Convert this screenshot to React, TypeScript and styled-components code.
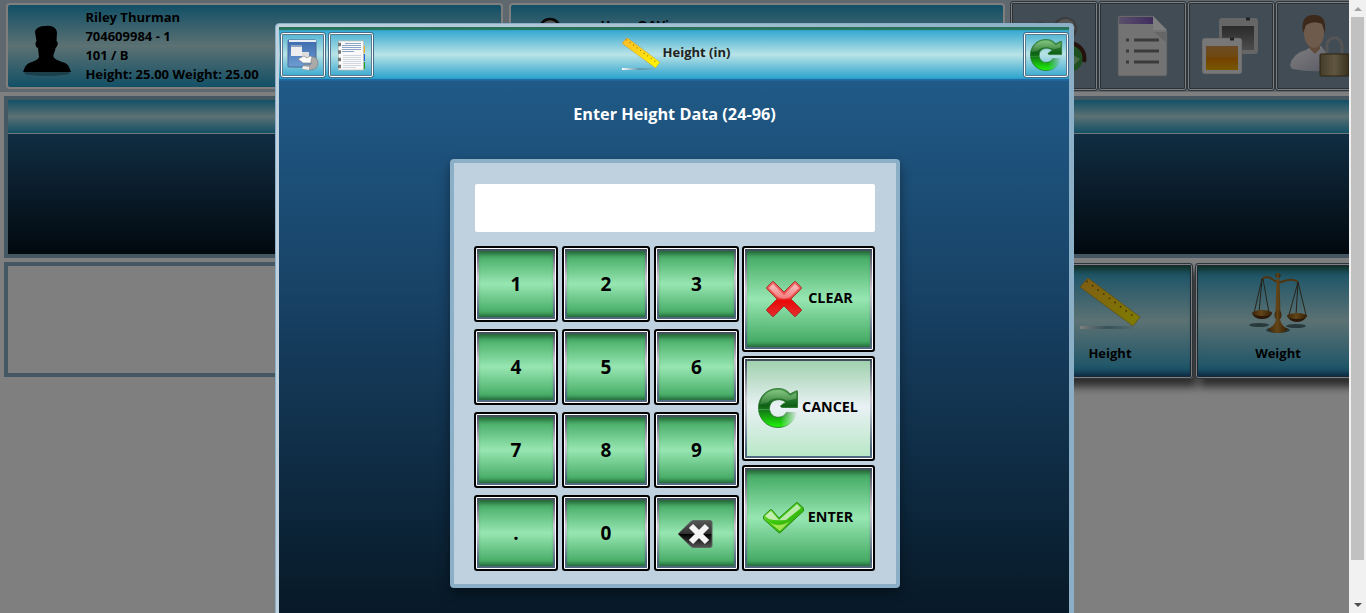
import React from 'react';
import styled, { createGlobalStyle, css } from 'styled-components';

const GlobalStyle = createGlobalStyle`
  * { box-sizing: border-box; }
  body { margin: 0; background: #fff; font-family: "Open Sans", sans-serif; overflow: hidden; }
  button { font-family: inherit; padding: 0; margin: 0; cursor: pointer; }
  svg { display: block; flex: none; overflow: visible; }
`;

const aqua = 'linear-gradient(#24a0cd 0%, #b8e3e6 50%, #24a0cd 100%)';

const Screen = styled.div`
  display: flex;
  width: 1366px;
  height: 613px;
  overflow: hidden;
`;

const Page = styled.main`
  position: relative;
  width: 1349px;
  height: 613px;
  overflow: hidden;
  background: #fff;
`;

const ScrollTrack = styled.div`
  width: 17px;
  height: 613px;
  background: #f1f1f1;
  display: flex;
  flex-direction: column;
  padding: 0 2px;
`;

const ScrollEnd = styled.div<{ $pushed?: boolean }>`
  height: 17px;
  display: flex;
  align-items: center;
  justify-content: center;
  ${(p) => p.$pushed && 'margin-top: auto;'}
`;

const ScrollThumb = styled.div`
  height: 543px;
  background: #c1c1c1;
`;

const TopBar = styled.header`
  display: flex;
  height: 92px;
  padding: 3px 0 0 6px;
  background: #bfd1df;
`;

const InfoCard = styled.section<{ $width: number }>`
  display: flex;
  flex: none;
  width: ${(p) => p.$width}px;
  height: 86px;
  margin-right: 6px;
  border: 2px solid #fff;
  border-radius: 4px;
  background: ${aqua};
  color: #000;
  padding: 3px 0 0 14px;
`;

const Avatar = styled.div`
  width: 50px;
  padding-top: 16px;
  margin-right: 13.4px;
`;

const InfoLines = styled.div`
  font-size: 13px;
  font-weight: 700;
  line-height: 19px;
  white-space: nowrap;
`;

const UserLines = styled(InfoLines)`
  padding: 8px 0 0 12px;
`;

const ToolGroup = styled.nav`
  display: flex;
  margin: -2px 0 0 -1.5px;
`;

const ToolButton = styled.button`
  display: flex;
  flex: none;
  align-items: center;
  justify-content: center;
  width: 88.5px;
  height: 90px;
  border: 1px solid #5b6c7b;
  border-radius: 3px;
  background: #8299aa;
  box-shadow: inset 0 0 0 1px #fff, inset 0 0 0 2px #53616c;
`;

const BannerPanel = styled.section`
  margin: 4px 0 0 4px;
  height: 162px;
  width: 1360px;
  border: 4px solid #8aafc6;
  display: flex;
  flex-direction: column;
`;

const BannerHead = styled.div`
  height: 34px;
  border-bottom: 1px solid #e4eef4;
  background: ${aqua};
`;

const BannerBody = styled.div`
  flex: 1;
  background: linear-gradient(#205a85 0%, #163e5c 40%, #04121e 100%);
`;

const Lower = styled.div`
  display: flex;
  width: 1357px;
  justify-content: space-between;
  margin: 4px 0 0 4px;
`;

const EmptyPanel = styled.section`
  width: 600px;
  height: 115px;
  border: 4px solid #8aafc6;
`;

const TileGroup = styled.div`
  display: flex;
  gap: 3px;
  padding-top: 1px;
`;

const Tile = styled.button`
  display: flex;
  flex-direction: column;
  align-items: center;
  width: 166px;
  height: 116px;
  border: 1px solid #5b6c7b;
  border-radius: 3px;
  padding-top: 8px;
  background: ${aqua};
  box-shadow: inset 0 0 0 1px #fff, inset 0 0 0 2px #34506c, inset 0 10px 8px -5px #224d21,
    inset 0 -9px 7px -5px #193a6c, 4px 8px 8px rgba(0, 0, 0, 0.65);
  font-size: 13px;
  font-weight: 700;
  color: #000;

  &:first-child {
    margin-right: -1px;
  }
`;

const TilePicture = styled.span<{ $drop?: number }>`
  display: block;
  height: 62px;
  padding-top: ${(p) => p.$drop ?? 0}px;
`;

const TileLabel = styled.span`
  margin-top: 10px;
  line-height: 18px;
`;

const Backdrop = styled.div`
  position: absolute;
  inset: 0;
  display: flex;
  justify-content: center;
  align-items: flex-start;
  padding-top: 23px;
  background: rgba(0, 0, 0, 0.5);
`;

const Dialog = styled.section`
  display: flex;
  flex-direction: column;
  width: 799px;
  height: 700px;
  flex: none;
  border: 1px solid #8aafc6;
  border-radius: 4px 4px 0 0;
  padding: 3px 4px 0 3px;
  background: linear-gradient(to right, #bfd1df, #8aafc6);
`;

const DialogBar = styled.header`
  display: flex;
  flex: none;
  align-items: flex-start;
  height: 54px;
  padding: 5px 0 0 1px;
  background: linear-gradient(#24a0cd 0%, #b8e3e6 51%, #24a0cd 98%);
  box-shadow: inset 0 3px 1px #287357, inset 0 -2px 1px #21659f;
`;

const BarButton = styled.button`
  display: flex;
  flex: none;
  align-items: center;
  justify-content: center;
  width: 46px;
  height: 46px;
  border: 1px solid #426c88;
  border-radius: 3px;
  background: linear-gradient(#4eb3d3, #b8e3e6 48%, #36a8cf);
  box-shadow: inset 0 0 0 1px #fff, inset 0 0 0 2px #5c7990;
`;

const BarTools = styled.div`
  display: flex;
  gap: 2px;
`;

const DialogTitle = styled.h1`
  display: flex;
  flex: 1;
  justify-content: center;
  margin: 0;
  padding: 5px 45px 0 0;
  font-size: 13px;
  font-weight: 700;
  color: #222;
`;

const TitleText = styled.span`
  line-height: 18px;
  padding: 6px 0 0 3px;
`;

const DialogBody = styled.div`
  flex: none;
  height: 640px;
  display: flex;
  flex-direction: column;
  align-items: center;
  background: linear-gradient(#205a87 0, #184266 210px, #081b2a 515px, #071723 100%);
`;

const Prompt = styled.h2`
  margin: 20px 0 0 1px;
  height: 26px;
  line-height: 26px;
  font-size: 16.25px;
  font-weight: 700;
  color: #fff;
`;

const Keypad = styled.div`
  width: 450px;
  height: 429px;
  margin: 32px 0 0 1px;
  border: 4px solid #8aafc6;
  border-radius: 4px;
  background: #bfd1df;
  padding: 21px 20px 0 20px;
  box-shadow: 0 5px 12px rgba(0, 0, 0, 0.4);
`;

const Entry = styled.input`
  display: block;
  width: 400px;
  height: 48px;
  margin: 0 0 14px 1px;
  border: 0;
  border-radius: 2px;
  background: #fff;
  outline: none;
`;

const KeyArea = styled.div`
  display: flex;
  gap: 3px;
`;

const KeyGrid = styled.div`
  display: grid;
  grid-template-columns: 84px 88px 85px;
  grid-auto-rows: 76px;
  gap: 7px 4px;
`;

const ActionColumn = styled.div`
  display: grid;
  grid-template-rows: 106px 105px 106px;
  gap: 4px;
  width: 133px;
`;

const KeyFrame = styled.button`
  display: flex;
  width: 100%;
  height: 100%;
  border: 2px solid #000;
  border-radius: 3px;
  padding: 3px;
  background: linear-gradient(#3a4654, #c9c3d0 40%, #b5bdc8 52%, #4e667b 90%, #526a80);
  box-shadow: inset 0 0 0 1px #fff;
`;

const KeyFace = styled.span<{ $hover?: boolean; $small?: boolean }>`
  display: flex;
  flex: 1;
  align-items: center;
  justify-content: center;
  align-self: stretch;
  height: 100%;
  font-size: ${(p) => (p.$small ? 14.3 : 19)}px;
  font-weight: 700;
  color: #000;
  padding-bottom: 1px;
  padding-left: ${(p) => (p.$small ? 0 : 1)}px;
  ${(p) =>
    p.$hover
      ? css`
          background: linear-gradient(#a0d1ae, #e9f1f4 48%, #b9e8c7);
        `
      : css`
          background: linear-gradient(#3ba45b, #97e6b2 50%, #3ba45b);
          box-shadow: inset 0 7px 5px -4px #256238, inset 0 -5px 4px -3px #256036;
        `}
`;

const ActionText = styled.span<{ $gap: number }>`
  margin-left: ${(p) => p.$gap}px;
  padding-bottom: 3px;
`;

function Key({ children }: { children: React.ReactNode }) {
  return (
    <KeyFrame>
      <KeyFace>{children}</KeyFace>
    </KeyFrame>
  );
}

function Action({ icon, label, gap, hover }: { icon: React.ReactNode; label: string; gap: number; hover?: boolean }) {
  return (
    <KeyFrame>
      <KeyFace $small $hover={hover}>
        {icon}
        <ActionText $gap={gap}>{label}</ActionText>
      </KeyFace>
    </KeyFrame>
  );
}

const DefsHost = styled.svg`
  position: absolute;
`;

const Defs = () => (
  <DefsHost width="0" height="0">
    <defs>
      <linearGradient id="rulerFill" x1="0" x2="1" y1="0" y2="1">
        <stop offset="0" stopColor="#ffb82b" />
        <stop offset="1" stopColor="#fffa00" />
      </linearGradient>
      <linearGradient id="rulerShade">
        <stop offset="0" stopColor="#fff" />
        <stop offset=".5" stopColor="#5d8b9c" stopOpacity=".7" />
        <stop offset="1" stopColor="#5d8b9c" stopOpacity="0" />
      </linearGradient>
      <linearGradient id="arrowFill" x1="0" x2="0" y1="0" y2="1">
        <stop offset="0" stopColor="#4f9f50" />
        <stop offset=".44" stopColor="#0f5f17" />
        <stop offset=".62" stopColor="#138a13" />
        <stop offset=".95" stopColor="#1ee80a" />
      </linearGradient>
      <linearGradient id="arrowFade" x1="0" x2="1" y1="0" y2="0">
        <stop offset=".55" stopColor="#fff" />
        <stop offset=".9" stopColor="#fff" stopOpacity=".05" />
      </linearGradient>
      <linearGradient id="arrowGloss" x1="0" x2="0" y1="0" y2="1">
        <stop offset="0" stopColor="#b9ecb5" stopOpacity=".5" />
        <stop offset="1" stopColor="#b9ecb5" stopOpacity=".15" />
      </linearGradient>
      <mask id="tailMask" maskUnits="userSpaceOnUse" x="-2" y="-2" width="46" height="46">
        <rect x="-2" y="-2" width="46" height="24" fill="#fff" />
        <rect x="-2" y="22" width="46" height="22" fill="url(#arrowFade)" />
      </mask>
      <linearGradient id="redFill" x1="0" x2="0" y1="0" y2="1">
        <stop offset="0" stopColor="#ee6a6a" />
        <stop offset=".45" stopColor="#ee4a4a" />
        <stop offset=".55" stopColor="#e80808" />
        <stop offset="1" stopColor="#e43030" />
      </linearGradient>
      <linearGradient id="gloss" x1="0" x2="0" y1="0" y2="1">
        <stop offset="0" stopColor="#fff" stopOpacity=".6" />
        <stop offset="1" stopColor="#fff" stopOpacity=".25" />
      </linearGradient>
      <linearGradient id="checkFill" x1="0" x2="1" y1="0" y2="1">
        <stop offset="0" stopColor="#8fdc50" />
        <stop offset=".45" stopColor="#3cc80c" />
        <stop offset="1" stopColor="#2b9c10" />
      </linearGradient>
      <linearGradient id="blackFill" x1="0" x2="0" y1="0" y2="1">
        <stop offset="0" stopColor="#555" />
        <stop offset=".48" stopColor="#333" />
        <stop offset=".5" stopColor="#000" />
        <stop offset="1" stopColor="#555" />
      </linearGradient>
      <linearGradient id="brass" x1="0" x2="1">
        <stop offset="0" stopColor="#7b4a12" />
        <stop offset=".45" stopColor="#c48a30" />
        <stop offset="1" stopColor="#6b3c0c" />
      </linearGradient>
      <linearGradient id="windowFill" x1="0" x2="0" y1="0" y2="1">
        <stop offset="0" stopColor="#3c6bae" />
        <stop offset="1" stopColor="#6f9dd2" />
      </linearGradient>
      <linearGradient id="silver" x1="0" x2="0" y1="0" y2="1">
        <stop offset="0" stopColor="#777" />
        <stop offset="1" stopColor="#9c9c9c" />
      </linearGradient>
      <linearGradient id="amber" x1="0" x2="0" y1="0" y2="1">
        <stop offset="0" stopColor="#d8974a" />
        <stop offset=".45" stopColor="#dd9420" />
        <stop offset=".5" stopColor="#e68200" />
        <stop offset="1" stopColor="#f0b000" />
      </linearGradient>
      <linearGradient id="greyPhoto" x1="0" x2="0" y1="0" y2="1">
        <stop offset="0" stopColor="#555" />
        <stop offset="1" stopColor="#999" />
      </linearGradient>
      <linearGradient id="lilac">
        <stop offset="0" stopColor="#b3a2d8" />
        <stop offset="1" stopColor="#8059bd" />
      </linearGradient>
      <linearGradient id="lockFill">
        <stop offset="0" stopColor="#8b7952" />
        <stop offset=".5" stopColor="#c2ad81" />
        <stop offset="1" stopColor="#73643f" />
      </linearGradient>
      <linearGradient id="shirt" x1="0" x2="1" y1="0" y2="1">
        <stop offset="0" stopColor="#fff" />
        <stop offset="1" stopColor="#b3b4cb" />
      </linearGradient>
    </defs>
  </DefsHost>
);

const RulerIcon = ({ size }: { size: number }) => (
  <svg width={size} height={size} viewBox="0 0 60 60">
    <path d="M0 49h56v3H0z" fill="url(#rulerShade)" />
    <path d="M8 1 60 40 53 49 0 10z" fill="url(#rulerFill)" stroke="#b78a16" strokeWidth=".6" />
    <g fill="#8a640e">
      {[0, 1, 2, 3, 4, 5, 6, 7, 8].map((i) => (
        <circle key={i} cx={7 + i * 5.6} cy={4.5 + i * 4.2} r=".9" />
      ))}
    </g>
  </svg>
);

const RefreshIcon = ({ size }: { size: number }) => (
  <svg width={size} height={size} viewBox="0 0 41 41">
    <g mask="url(#tailMask)">
      <path
        d="M33 6 39 3C40.500 2.500 40.500 3 40.500 4V20H25.500C23 20 22.500 18.500 24 17.500L28.500 14.500C26 12.500 23 11.800 20.500 12C15 12.300 11.800 16 11.800 21C12 26.500 16 30 20.500 30C25 30 27.500 28 29 25H39.500C38 34 30 40.500 20.500 40.500C9 40.500.5 31.500.5 20.500C.5 9 9 .5 20.500.5C25.500.5 29.500 2 33 6Z"
        fill="url(#arrowFill)"
        stroke="#216c21"
        strokeWidth=".8"
      />
      <path d="M2 17C4 7 11 2 20 2C26 2 29 4 33 8L39 5V11L30 13C22 9 14 10 10 15Z" fill="url(#arrowGloss)" />
    </g>
  </svg>
);

const ClearIcon = () => (
  <svg width="40" height="36" viewBox="-3 0 40 36">
    <path
      d="M6 1 1 6Q0 7 1 8L11 18 1 28Q0 29 1 30L6 35Q7 36 8 35L18 25 28 35Q29 36 30 35L35 30Q36 29 35 28L25 18 35 8Q36 7 35 6L30 1Q29 0 28 1L18 11 8 1Q7 0 6 1Z"
      fill="url(#redFill)"
      stroke="#a23a2c"
    />
    <path d="M3 7 7 3 18 14 29 3 33 7 24 16Q18 20 12 16Z" fill="url(#gloss)" />
  </svg>
);

const CheckIcon = () => (
  <svg width="41" height="32" viewBox="0 0 41 32">
    <path d="M.5 14 7 8Q8 7 9 8L16 16 33 1Q34 0 35 1L40.500 6V9L18 30Q16.500 32 15 30L.5 17Z" fill="url(#checkFill)" stroke="#2e8f17" />
    <path d="M2 14 8 9 16 18 34 2 38 6 23 18Q12 19 6 17Z" fill="#fff" opacity=".65" />
    <path d="M7 21Q17 26 27 19L17 29Z" fill="#d8f878" opacity=".65" />
  </svg>
);

const BackspaceIcon = () => (
  <svg width="39" height="28" viewBox="0 -1 39 28">
    <path d="M1 14 14 1.500Q15 .5 17 .5H33Q35 .5 35 2.500V25.500Q35 27.500 33 27.500H17Q15 27.500 14 26.500Z" fill="url(#blackFill)" stroke="#5b665f" />
    <path d="m14 6 16 16M30 6 14 22" stroke="#f4f4f4" strokeWidth="6" />
  </svg>
);

const PersonShadow = () => (
  <svg width="50" height="53" viewBox="0 0 50 53">
    <ellipse cx="25" cy="49" rx="23" ry="3" fill="#1b4958" opacity=".5" />
    <path d="M13 8C14 3 19 2 24 2 30 1 35 4 35 9L34.500 17C36.500 18 36 22 33.500 24 33 29 31 29 31.500 33 34 38 45 37 47 43L49 48H1L3 43C6 37 16 38 17 33L16 24C13 23 13 19 14.500 17Z" />
  </svg>
);

const UserBadge = () => (
  <svg width="50" height="50" viewBox="0 0 50 50">
    <circle cx="25" cy="5" r="10" fill="#aaa" stroke="#111" strokeWidth="2.500" />
  </svg>
);

const PeopleIcon = () => (
  <svg width="58" height="60" viewBox="0 0 58 60">
    <circle cx="16" cy="16" r="10" fill="url(#silver)" />
    <circle cx="40" cy="13" r="12" fill="#777" />
    <path d="M31 9Q39-2 48 6L51 14Q45 11 38 7Z" fill="#aaa" />
    <circle cx="44" cy="42" r="14" fill="#3d9e42" />
    <path d="M46 27C56 29 61 37 59 46" stroke="#4a2518" strokeWidth="4" fill="none" />
    <path d="m43 36 12 7-10 10z" fill="#8fce8e" />
  </svg>
);

const DocIcon = () => (
  <svg width="49" height="60" viewBox="0 0 49 60">
    <path d="M1 0H35L49 15V58Q49 60 47 60H1Q0 60 0 58V2Q0 0 1 0Z" fill="#e6e6e6" stroke="#aaa" strokeWidth=".7" />
    <path d="M1 1H35V8H1z" fill="url(#lilac)" />
    <path d="M35 0V14H49Z" fill="#fff" />
    <path d="M36 16H48V26Z" fill="#bbb" opacity=".6" />
    <g stroke="#777" strokeWidth="3">
      <path d="M8 24h3M16 24h25M8 35h3M16 35h25M8 46h3M16 46h25" />
    </g>
  </svg>
);

const PhotosIcon = () => (
  <svg width="57" height="56" viewBox="0 0 57 56">
    <rect x="17" y="0" width="39" height="36" rx="3" fill="#ccc" />
    <rect x="20" y="8" width="32" height="24" fill="url(#greyPhoto)" />
    <rect x="0" y="20" width="40" height="36" rx="3" fill="#efefef" stroke="#aaa" strokeWidth=".6" />
    <rect x="4" y="28" width="32" height="24" fill="url(#amber)" />
    <path d="M44 1h4M28 21h4" stroke="#444" strokeWidth="3" />
  </svg>
);

const LockUserIcon = () => (
  <svg width="59" height="62" viewBox="0 0 59 62">
    <path d="M0 50Q3 38 16 35L22 31H31L36 37 42 55Q24 58 2 54Z" fill="url(#shirt)" />
    <path d="M20 27h10v7l-5 5-6-6z" fill="#c49576" />
    <ellipse cx="24" cy="18" rx="10" ry="15" fill="#dfb698" />
    <path d="M13 18C11 4 16 0 24 0 34 0 36 6 35 18L32 9Q24 5 16 10Z" fill="#795239" />
    <path d="M37 41V31C37 20 52 20 52 31V41" fill="none" stroke="#aaa" strokeWidth="3" />
    <rect x="30" y="39" width="29" height="22" rx="1" fill="url(#lockFill)" stroke="#554524" />
  </svg>
);

const ScalesIcon = () => (
  <svg width="58" height="62" viewBox="0 0 58 62">
    <g fill="#233c44" opacity=".65">
      <ellipse cx="10" cy="53" rx="10" ry="2" />
      <ellipse cx="47" cy="54" rx="10" ry="2" />
      <ellipse cx="29" cy="58" rx="12" ry="3" />
    </g>
    <path d="M13 7Q18 3 23 7 29 12 35 9 45 6 49 10" fill="none" stroke="#9c6a20" strokeWidth="2" />
    <path d="M13 7 5 41M13 7 10 41M14 7 20 41M49 10 40 43M49 10 47 43M49 10 57 43" stroke="#47391e" strokeWidth=".9" fill="none" />
    <path d="M27.500 7h3L31.500 42h-5zM19 57Q26 54 27 47h4Q32 54 39 57 36 61 29 61T19 57Z" fill="url(#brass)" />
    <circle cx="29" cy="3.500" r="2.500" fill="url(#brass)" />
    <ellipse cx="29" cy="43" rx="3.500" ry="5" fill="url(#brass)" />
    <path d="M3 41H23Q21 47 13 47T3 41ZM38 43H58Q56 50 48 50T38 43Z" fill="#563111" />
    <ellipse cx="13" cy="41" rx="10" ry="3" fill="url(#brass)" />
    <ellipse cx="48" cy="44" rx="10" ry="3" fill="url(#brass)" />
  </svg>
);

const WindowIcon = () => (
  <svg width="32" height="32" viewBox="0 0 32 32">
    <rect x="1" y="1" width="28" height="27" rx="1" fill="url(#windowFill)" stroke="#4b6794" />
    <path d="M2 2h27" stroke="#e9eef4" strokeWidth="2" />
    <rect x="4" y="6" width="11" height="11" fill="#eee" />
    <path d="M4 7h11" stroke="#315b98" strokeWidth="1" />
    <path d="M15 13h7v7h-7z" fill="#ddd" />
    <path d="m11 20 6-3 3 2 3-2 6 2-5 5h-8z" fill="#fafafa" stroke="#777" strokeWidth=".6" />
    <path d="M25 18Q31 18 31 24T24 31L15 30 17 26H23Q25 25 24 22Z" fill="#aaa" stroke="#777" strokeWidth=".6" />
    <path d="m16 27 6 1v3l-7-1z" fill="#eee" />
  </svg>
);

const NotebookIcon = () => (
  <svg width="29" height="31" viewBox="0 0 29 31">
    <path d="M25 6h3v7h-3z" fill="#edb020" />
    <path d="M25 14h3v7h-3z" fill="#2868d8" />
    <path d="M25 22h3v7h-3z" fill="#20a020" />
    <path d="M1.500 1h25v29h-25z" fill="#fafafa" stroke="#bcb9b2" strokeWidth=".7" />
    <path d="M8 3.500h16M5 5.500h19M5 7.500h19M5 9.500h19M5 11.500h12" stroke="#7e9bc3" strokeWidth=".9" />
    <path d="M6 15.500h18M6 17.500h18M6 19.500h18M6 21.500h18M6 23.500h18M6 25.500h18M6 27.500h13" stroke="#cbd2dc" strokeWidth=".9" />
    <path d="M1 4.500h3M1 12h3M1 19.500h3M1 26.500h3" stroke="#747474" strokeWidth="3.500" />
  </svg>
);

export default function App() {
  return (
    <Screen>
      <GlobalStyle />
      <Defs />
      <Page>
        <TopBar>
          <InfoCard $width={497}>
            <Avatar>
              <PersonShadow />
            </Avatar>
            <InfoLines>
              <div>Riley Thurman</div>
              <div>704609984 - 1</div>
              <div>101 / B</div>
              <div>Height: 25.00 Weight: 25.00</div>
            </InfoLines>
          </InfoCard>
          <InfoCard $width={496}>
            <Avatar>
              <UserBadge />
            </Avatar>
            <UserLines>User: QAVi</UserLines>
          </InfoCard>
          <ToolGroup>
            <ToolButton><PeopleIcon /></ToolButton>
            <ToolButton><DocIcon /></ToolButton>
            <ToolButton><PhotosIcon /></ToolButton>
            <ToolButton><LockUserIcon /></ToolButton>
          </ToolGroup>
        </TopBar>
        <BannerPanel>
          <BannerHead />
          <BannerBody />
        </BannerPanel>
        <Lower>
          <EmptyPanel />
          <TileGroup>
            <Tile>
              <TilePicture $drop={5}><RulerIcon size={60} /></TilePicture>
              <TileLabel>Height</TileLabel>
            </Tile>
            <Tile>
              <TilePicture><ScalesIcon /></TilePicture>
              <TileLabel>Weight</TileLabel>
            </Tile>
          </TileGroup>
        </Lower>
        <Backdrop>
          <Dialog>
            <DialogBar>
              <BarTools>
                <BarButton><WindowIcon /></BarButton>
                <BarButton><NotebookIcon /></BarButton>
              </BarTools>
              <DialogTitle>
                <RulerIcon size={38} />
                <TitleText>Height (in)</TitleText>
              </DialogTitle>
              <BarButton><RefreshIcon size={32} /></BarButton>
            </DialogBar>
            <DialogBody>
              <Prompt>Enter Height Data (24-96)</Prompt>
              <Keypad>
                <Entry />
                <KeyArea>
                  <KeyGrid>
                    {['1', '2', '3', '4', '5', '6', '7', '8', '9', '.', '0'].map((k) => (
                      <Key key={k}>{k}</Key>
                    ))}
                    <Key><BackspaceIcon /></Key>
                  </KeyGrid>
                  <ActionColumn>
                    <Action icon={<ClearIcon />} label="CLEAR" gap={5} />
                    <Action icon={<RefreshIcon size={40} />} label="CANCEL" gap={4} hover />
                    <Action icon={<CheckIcon />} label="ENTER" gap={4} />
                  </ActionColumn>
                </KeyArea>
              </Keypad>
            </DialogBody>
          </Dialog>
        </Backdrop>
      </Page>
      <ScrollTrack>
        <ScrollEnd>
          <svg width="8" height="4" viewBox="0 0 8 4"><path d="M4 0 8 4H0z" fill="#a3a3a3" /></svg>
        </ScrollEnd>
        <ScrollThumb />
        <ScrollEnd $pushed>
          <svg width="8" height="4" viewBox="0 0 8 4"><path d="M0 0h8L4 4z" fill="#505050" /></svg>
        </ScrollEnd>
      </ScrollTrack>
    </Screen>
  );
}
